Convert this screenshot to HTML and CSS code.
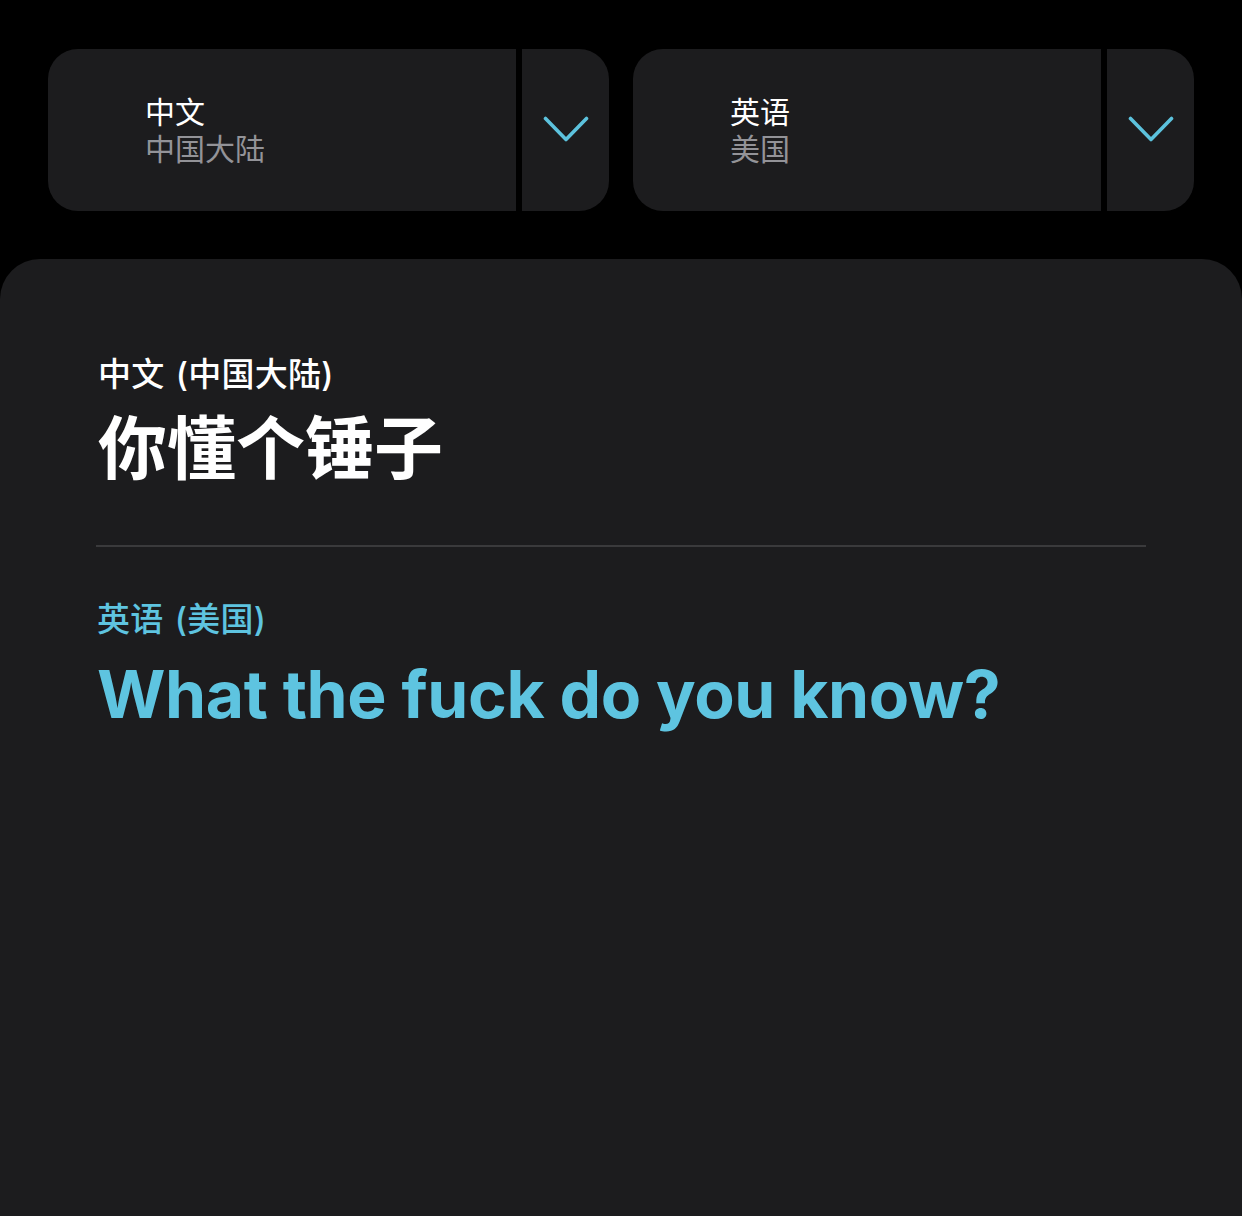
FILE: index.html
```html
<!DOCTYPE html>
<html lang="zh-CN">
<head>
<meta charset="utf-8">
<link rel="stylesheet" href="styles.css">
</head>
<body>
<div class="top">
  <div class="picker">
    <div class="picker-main">
      <div class="lang">中文</div>
      <div class="region">中国大陆</div>
    </div>
    <div class="picker-sep"></div>
    <div class="picker-btn">
      <svg width="46" height="28" viewBox="0 0 46 28"><path d="M2.5 2.5 L23 23.5 L43.5 2.5" fill="none" stroke="#5cc2dd" stroke-width="3.6" stroke-linecap="round" stroke-linejoin="round"/></svg>
    </div>
  </div>
  <div class="picker">
    <div class="picker-main">
      <div class="lang">英语</div>
      <div class="region">美国</div>
    </div>
    <div class="picker-sep"></div>
    <div class="picker-btn">
      <svg width="46" height="28" viewBox="0 0 46 28"><path d="M2.5 2.5 L23 23.5 L43.5 2.5" fill="none" stroke="#5cc2dd" stroke-width="3.6" stroke-linecap="round" stroke-linejoin="round"/></svg>
    </div>
  </div>
</div>
<div class="sheet">
  <div class="block">
    <div class="label">中文 (中国大陆)</div>
    <div class="text">你懂个锤子</div>
  </div>
  <div class="rule"></div>
  <div class="block block-tr">
    <div class="label accent">英语 (美国)</div>
    <div class="text accent en">What the fuck do you know?</div>
  </div>
</div>
</body>
</html>
```
FILE: styles.css
```css
html, body {
  margin: 0;
  padding: 0;
  background: #000;
  height: 100%;
}
body {
  font-family: Inter, "Noto Sans CJK SC", sans-serif;
  color: #fff;
  display: flex;
  flex-direction: column;
  overflow: hidden;
}
.top {
  display: flex;
  gap: 24px;
  padding: 49px 48px 0 48px;
}
.picker {
  flex: 1;
  height: 162px;
  display: flex;
  background: #1c1c1e;
  border-radius: 30px;
  overflow: hidden;
}
.picker-main {
  flex: 1;
  display: flex;
  flex-direction: column;
  justify-content: center;
  padding-left: 97px;
  padding-bottom: 2px;
}
.lang {
  font-family: "Noto Sans CJK SC", sans-serif;
  font-size: 30px;
  line-height: 37px;
  color: #fff;
}
.region {
  font-family: "Noto Sans CJK SC", sans-serif;
  font-size: 30px;
  line-height: 37px;
  color: #939398;
}
.picker-sep {
  width: 6px;
  background: #000;
}
.picker-btn {
  width: 87px;
  display: flex;
  align-items: center;
  justify-content: center;
  padding-bottom: 1px;
}
.sheet {
  flex: 1;
  margin-top: 48px;
  background: #1c1c1e;
  border-radius: 40px 40px 0 0;
  padding: 93px 96px 0 96px;
}
.block {
  padding-left: 2px;
}
.label {
  font-family: Inter, "Noto Sans CJK SC", sans-serif;
  font-size: 33px;
  font-weight: 500;
  line-height: 44px;
  letter-spacing: 0.3px;
  word-spacing: 2px;
}
.text {
  font-family: "Noto Sans CJK SC", sans-serif;
  font-size: 69px;
  font-weight: 700;
  line-height: 80px;
  margin-top: 8px;
}
.rule {
  height: 2px;
  background: #3a3a3c;
  margin-top: 61px;
}
.block-tr {
  margin-top: 50px;
  padding-left: 1px;
}
.accent {
  color: #5ec4e0;
}
.en {
  font-family: Inter, sans-serif;
  font-size: 66px;
  font-weight: 700;
  letter-spacing: -0.4px;
  margin-top: 13px;
}
```
